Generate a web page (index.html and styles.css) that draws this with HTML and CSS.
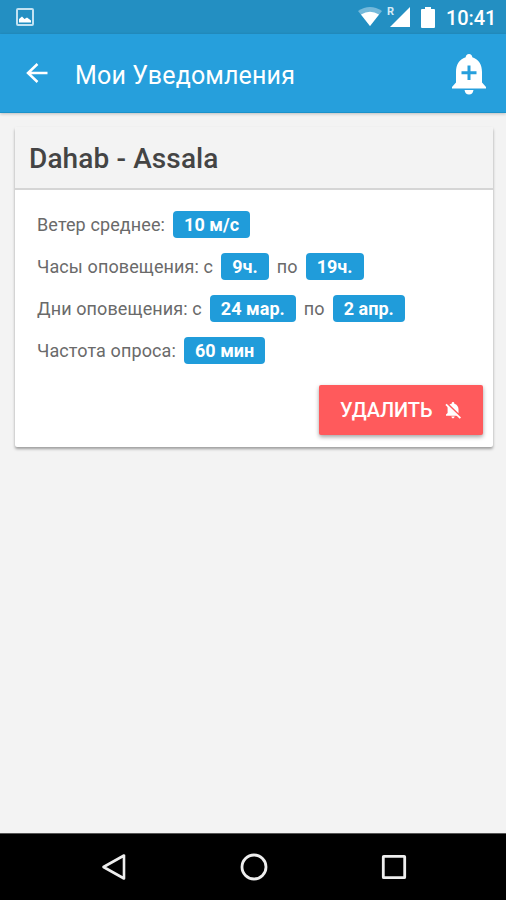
FILE: index.html
```
<!DOCTYPE html>
<html lang="ru">
<head>
<meta charset="utf-8">
<title>Мои Уведомления</title>
<link rel="stylesheet" href="styles.css">
</head>
<body>
<div class="screen">
  <div class="status">
    <svg class="status-picture" width="18" height="18" viewBox="0 0 18 18"><rect x="1" y="1" width="16" height="16" rx="1" fill="none" stroke="#c2e2f2" stroke-width="2"/><path d="M3 14.500V11l3-2.500L8.500 11 11 9.500l4 3v2z" fill="#fff"/></svg>
    <svg class="status-wifi" width="24" height="20" viewBox="0 0 24 20"><path d="M0 4Q12-4 24 4L12 19z" fill="#75b9da"/><path d="M3 7.500Q12 2 21 7.500L12 19z" fill="#fff"/></svg>
    <div class="signal"><span class="roaming">R</span><svg width="20" height="20" viewBox="0 0 20 20"><path d="M20 0v20H0z" fill="#fff"/></svg></div>
    <svg class="battery" width="14" height="21" viewBox="0 0 14 21"><path d="M4 0h6v2h3q1 0 1 1v17q0 1-1 1H1q-1 0-1-1V3q0-1 1-1h3z" fill="#fff"/></svg>
    <span class="clock">10:41</span>
  </div>
  <header class="toolbar">
    <svg class="back" width="22" height="20" viewBox="0 0 22 20"><path d="M11.500 1 2 10l9.500 9M2 10h19.500" fill="none" stroke="#fff" stroke-width="2.500"/></svg>
    <h1>Мои Уведомления</h1>
    <svg class="bell-add" width="34" height="41" viewBox="0 0 34 41"><path d="M17 0c2 0 3.200 1.400 3.300 3.300C27 5.500 30 11 30 18v10.500l4 4.500v1.500H0V33l4-4.500V18C4 11 7 5.500 13.700 3.300 13.800 1.400 15 0 17 0z" fill="#fff"/><path d="M12.500 36h9q-.8 4.500-4.500 4.500T12.500 36z" fill="#fff"/><path d="M17 11.500v14.500M9.500 18.700h15" stroke="#269fdc" stroke-width="3"/></svg>
  </header>
  <main>
    <section class="card">
      <h2>Dahab - Assala</h2>
      <div class="details">
        <div class="row"><span>Ветер среднее:</span><b>10 м/с</b></div>
        <div class="row"><span>Часы оповещения: с</span><b>9ч.</b><span>по</span><b>19ч.</b></div>
        <div class="row"><span>Дни оповещения: с</span><b>24 мар.</b><span>по</span><b>2 апр.</b></div>
        <div class="row"><span>Частота опроса:</span><b>60 мин</b></div>
      </div>
      <button class="delete"><span>УДАЛИТЬ</span>
        <svg width="17" height="17" viewBox="0 0 17 17"><path d="M4.500 2.500Q5.500 1.900 6.700 1.700V1.300a1.300 1.300 0 0 1 2.600 0v.4C12.200 2.500 13.500 4.700 13.500 7.300v4zM2.600 4.200 12.400 13.800H1v-1.200l1.600-1.500z" fill="#fff"/><path d="M6.300 14.600h3.400q-.3 1.800-1.700 1.800t-1.700-1.800z" fill="#fff"/><path d="M1 2.300 15.400 16.200" stroke="#fff" stroke-width="1.800"/></svg>
      </button>
    </section>
  </main>
  <nav>
    <svg width="26" height="28" viewBox="0 0 26 28"><path d="M23 2.500v23L2.500 14z" fill="none" stroke="#eee" stroke-width="2.600" stroke-linejoin="round"/></svg>
    <svg width="28" height="28" viewBox="0 0 28 28"><circle cx="14" cy="14" r="12" fill="none" stroke="#eee" stroke-width="2.800"/></svg>
    <svg width="26" height="26" viewBox="0 0 26 26"><rect x="2.300" y="2.300" width="21.400" height="21.400" rx=".5" fill="none" stroke="#eee" stroke-width="2.800"/></svg>
  </nav>
</div>
</body>
</html>
```
FILE: styles.css
```
* { box-sizing: border-box; }
body { margin: 0; font-family: Roboto, "Liberation Sans", sans-serif; }
svg { display: block; flex: none; }
.screen { width: 506px; height: 900px; display: flex; flex-direction: column; background: #f3f3f3; overflow: hidden; }
.status { height: 34px; flex: none; display: flex; align-items: center; padding: 0 11px 0 16px; background: #238fc2; color: #fff; }
.status-picture { margin-right: auto; }
.status-wifi { margin-right: 5px; }
.signal { display: flex; align-items: flex-start; margin-right: 11px; }
.roaming { width: 6px; margin-right: -3px; font-size: 11px; line-height: 10px; font-weight: 700; color: #d5ebf6; }
.battery { margin-right: 11px; }
.clock { width: 49px; font-size: 20px; line-height: 34px; font-weight: 500; letter-spacing: -.1px; padding-top: 1px; white-space: nowrap; }
.toolbar { height: 79px; flex: none; display: flex; align-items: center; padding: 2px 20px 0 26px; background: #269fdc; border-bottom: 1px solid #1b92ca; box-shadow: 0 1px 3px rgba(0,0,0,.22); color: #fff; }
.back { margin: -2px 27px 0 0; }
h1 { margin: 3px auto 0 0; font-size: 25px; line-height: 40px; font-weight: 400; letter-spacing: .15px; white-space: nowrap; }
main { flex: 1; padding: 14px 13px 0 15px; }
.card { height: 320px; display: flex; flex-direction: column; background: #fff; border-radius: 2px; box-shadow: 0 2px 3px rgba(0,0,0,.36); }
h2 { margin: 0; height: 63px; padding: 1px 14px 0; border-bottom: 2px solid #d5d5d5; border-radius: 2px 2px 0 0; background: #f3f3f3; color: #444; font-size: 28px; line-height: 62px; font-weight: 500; letter-spacing: .12px; }
.details { display: flex; flex-direction: column; gap: 15px; padding: 21px 22px 0; }
.row { height: 27px; display: flex; align-items: center; gap: 8px; color: #6a6a6a; font-size: 18px; line-height: 27px; letter-spacing: .11px; white-space: nowrap; }
.row b { height: 27px; padding: 0 11px; border-radius: 4px; background: #209cda; color: #fff; font-weight: 700; letter-spacing: .03px; }
.delete { align-self: flex-end; display: flex; align-items: center; gap: 12px; width: 164px; height: 50px; margin: 21px 10px 0 0; padding: 0 0 0 21px; border: 0; border-radius: 2px; background: #ff5a5c; color: #fff; box-shadow: 0 2px 4px rgba(0,0,0,.36); font: 500 20px/50px Roboto, "Liberation Sans", sans-serif; letter-spacing: -.1px; }
nav { height: 67px; flex: none; display: flex; align-items: center; justify-content: space-between; padding: 0 99px 0 101px; background: #000; border-top: 1px solid #555; }
```
